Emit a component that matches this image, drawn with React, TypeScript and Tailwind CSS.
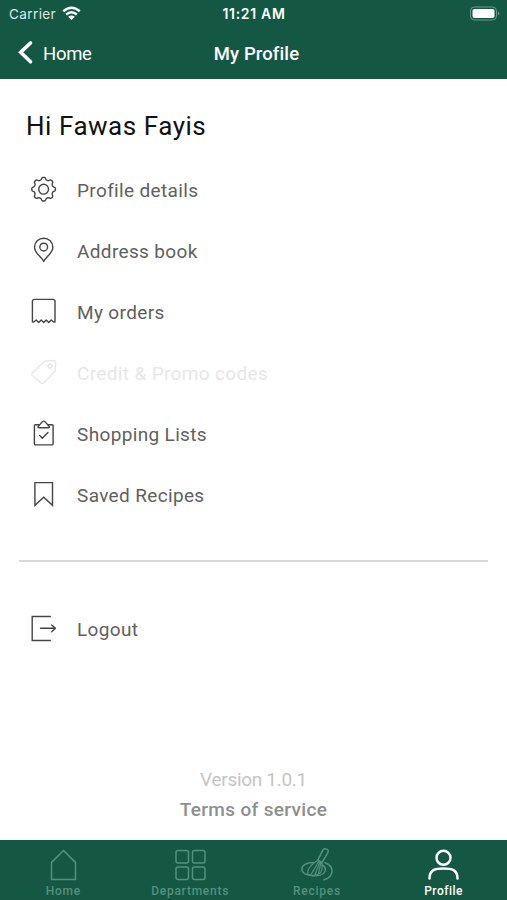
import type { ReactNode } from 'react';

const iconProps = {
  fill: 'none',
  stroke: 'currentColor',
  strokeLinecap: 'round' as const,
  strokeLinejoin: 'round' as const,
};

function Glyph({ children }: { children: ReactNode }) {
  return (
    <svg {...iconProps} width="28" height="28" viewBox="0 0 28 28" strokeWidth="1.4" className="shrink-0">
      {children}
    </svg>
  );
}

// Outline of an eight-toothed cog with rounded teeth.
const cogOutline = Array.from({ length: 144 }, (_, i) => {
  const angle = (i / 144) * Math.PI * 2;
  const radius = 10.7 + 1.25 * Math.tanh(1.6 * Math.cos(8 * angle));
  return `${(13.6 + radius * Math.sin(angle)).toFixed(2)},${(13.2 - radius * Math.cos(angle)).toFixed(2)}`;
}).join(' ');

const gear = (
  <Glyph>
    <polygon points={cogOutline} />
    <circle cx="13.6" cy="13.2" r="4.9" />
  </Glyph>
);

const pin = (
  <Glyph>
    <path d="M13.7 24.5C12.5 20.4 4.5 16.6 4.5 10.2A9.2 9 0 0 1 22.9 10.2C22.9 16.6 14.9 20.4 13.7 24.5Z" />
    <circle cx="13.7" cy="10.1" r="3.9" />
  </Glyph>
);

const receipt = (
  <Glyph>
    <path d="M2.4 24V3.5Q2.4 1.4 4.6 1.4H22.8Q25 1.4 25 3.5V24H23.7L21.2 22L18.7 24.4L16.2 22L13.7 24.4L11.2 22L8.7 24.4L6.2 22L3.7 24Z" />
  </Glyph>
);

const tag = (
  <Glyph>
    <path d="M15.8 2.1L23.4 1.5Q25.7 1.4 25.7 3.7L25.2 11.2Q25.1 12.1 24.4 12.9L13.9 23.7Q12.4 25.2 10.9 23.7L2.3 16.5Q1.1 15.2 2.4 13.9L13.8 3Q14.6 2.2 15.8 2.1Z" />
    <circle cx="20" cy="7" r="2" />
  </Glyph>
);

const clipboard = (
  <Glyph>
    <path d="M9.2 4.7H5.4Q4.4 4.7 4.4 5.7V23.9Q4.4 24.9 5.4 24.9H22.1Q23.1 24.9 23.1 23.9V5.7Q23.1 4.7 22.1 4.7H18.3" />
    <path d="M9.3 7.7H18.2Q20.1 7.7 19 6.2L15.2 1.9Q13.7 .4 12.2 1.9L8.4 6.2Q7.3 7.7 9.3 7.7ZM9.7 15.5L12.4 18.2L17.9 12.5" />
  </Glyph>
);

const bookmark = (
  <Glyph>
    <path strokeLinejoin="miter" d="M4.9 1.6H22.5V24.3L13.7 16.2L4.9 24.3Z" />
  </Glyph>
);

const logout = (
  <Glyph>
    <path strokeLinecap="butt" strokeLinejoin="miter" d="M20.8 1.5H2.2V25.5H20.8" />
    <path d="M10.5 13.3H25M21.7 10L25.4 13.3L21.7 16.8" />
  </Glyph>
);

const rows = [
  { label: 'Profile details', icon: gear },
  { label: 'Address book', icon: pin },
  { label: 'My orders', icon: receipt },
  { label: 'Credit & Promo codes', icon: tag, off: true },
  { label: 'Shopping Lists', icon: clipboard },
  { label: 'Saved Recipes', icon: bookmark },
];

function Row({ label, icon, off }: { label: string; icon: ReactNode; off?: boolean }) {
  return (
    <li className={`flex h-[61px] items-center pl-[30px] ${off ? 'text-[#e6e6e6]' : 'text-[#444]'}`}>
      {icon}
      <span className={`mt-[2px] ml-[19px] text-[19px] leading-6 tracking-[0.35px] whitespace-nowrap ${off ? '' : 'text-[#606060]'}`}>
        {label}
      </span>
    </li>
  );
}

function Tab({ label, icon, active }: { label: string; icon: ReactNode; active?: boolean }) {
  return (
    <a className={`flex flex-1 flex-col items-center pt-[7px] ${active ? 'text-white' : 'text-[#54907e]'}`}>
      <svg {...iconProps} width="36" height="36" viewBox="0 0 36 36" strokeWidth="1.5">
        {icon}
      </svg>
      <span className={`text-[12px] leading-4 font-medium ${active ? 'tracking-[0.5px]' : 'tracking-[0.75px]'}`}>{label}</span>
    </a>
  );
}

export default function App() {
  return (
    <div className="flex h-[900px] w-[507px] flex-col overflow-hidden bg-white font-['Roboto',sans-serif]">
      <header className="h-[79px] shrink-0 bg-[#145843] text-white">
        <div className="grid h-[27px] grid-cols-3 items-center pr-[6px] pl-[9px] font-['Inter',sans-serif] text-[13.5px]">
          <div className="flex items-center gap-[6px] text-[#dce9e4]">
            <span className="pt-px tracking-[0.4px]">Carrier</span>
            <svg width="19" height="15" viewBox="0 0 19 15" fill="none" stroke="white" strokeWidth="2.5">
              <path d="M1.2 5.2Q9.5-1.8 17.8 5.2M4.2 8.5Q9.5 4.1 14.8 8.5" />
              <path fill="white" stroke="none" d="M6.2 10.7Q9.5 8.3 12.8 10.7L9.5 14.1Z" />
            </svg>
          </div>
          <span className="-ml-[2px] pb-px text-center text-[14px] font-semibold tracking-[0.7px]">11:21 AM</span>
          <svg width="32" height="15" viewBox="0 0 32 15" fill="none" className="justify-self-end">
            <rect x="1.5" y="1" width="26" height="13" rx="4" stroke="#6a9b8b" />
            <rect x="3.5" y="3" width="22" height="9" rx="2" fill="white" />
            <path d="M29 5.5Q32 7.5 29 9.5Z" fill="#6a9b8b" />
          </svg>
        </div>
        <div className="grid h-[52px] grid-cols-3 items-center">
          <a className="flex items-center pl-[17px]">
            <svg width="17" height="26" viewBox="0 0 17 26" fill="none" stroke="white" strokeWidth="3.6" strokeLinecap="round" strokeLinejoin="miter">
              <path d="M13.5 3L3.7 12.3L13.5 21.8" />
            </svg>
            <span className="mt-[3px] ml-[9px] text-[18.5px] tracking-[-0.3px]">Home</span>
          </a>
          <h1 className="mt-[3px] pl-[6px] text-center text-[18.5px] font-medium tracking-[0.1px]">My Profile</h1>
        </div>
      </header>

      <main className="flex flex-1 flex-col">
        <h2 className="mt-[31px] ml-[26px] text-[26px] leading-8 tracking-[0.53px] text-[#111]">Hi Fawas Fayis</h2>
        <ul className="mt-[17px]">
          {rows.map((row) => (
            <Row key={row.label} {...row} />
          ))}
        </ul>
        <hr className="mx-[19px] mt-[35px] border-t-2 border-[#d8d8d8]" />
        <ul className="mt-[36px]">
          <Row label="Logout" icon={logout} />
        </ul>
        <footer className="mt-auto flex flex-col items-center pb-[15px] text-[19px] leading-[30px]">
          <span className="tracking-[-0.3px] text-[#c4c4c4]">Version 1.0.1</span>
          <a className="font-medium tracking-[0.35px] text-[#8e8e8e]">Terms of service</a>
        </footer>
      </main>

      <nav className="flex h-[60px] shrink-0 bg-[#145843]">
        <Tab label="Home" icon={<path strokeLinejoin="miter" d="M6.5 32.5V15.4L18.5 3.5L30.5 15.4V32.5Z" />} />
        <Tab
          label="Departments"
          icon={
            <>
              <rect x="4" y="3.5" width="12.5" height="12.5" rx="2" />
              <rect x="20.5" y="3.5" width="12.5" height="12.5" rx="2" />
              <rect x="4" y="20" width="12.5" height="12.5" rx="2" />
              <rect x="20.5" y="20" width="12.5" height="12.5" rx="2" />
            </>
          }
        />
        <Tab
          label="Recipes"
          icon={
            <>
              <path d="M18.8 13.2L23.7 3.4Q24.9 1 27.6 2.1Q30.1 3.2 28.9 5.7L23 15.5Z" />
              <path d="M18.8 13.2Q10.4 18.2 8.8 24.2Q8.1 27.8 11.6 28.2Q17.2 29.4 21.5 25.8Q23.7 22.4 23 15.5M19.7 14.3L11.8 28M20.9 14.7L15.8 28.3M22 15.2L19.3 27.2" strokeWidth="1.25" />
              <path d="M14.8 15.5C7.2 15.3 2.8 18.5 2.8 22.3C2.8 29.7 23 31.3 26 24.5Q27.4 20 23.2 18M26 15.8C32 17.8 34.4 22.3 32.3 27.2Q30 31.8 25 32.8" />
            </>
          }
        />
        <Tab
          active
          label="Profile"
          icon={
            <g strokeWidth="2.5">
              <circle cx="17.5" cy="10.8" r="7" />
              <path d="M3.5 31.5C3.5 22.5 9.5 21.5 17.5 21.5S31.5 22.5 31.5 31.5" />
            </g>
          }
        />
      </nav>
    </div>
  );
}
